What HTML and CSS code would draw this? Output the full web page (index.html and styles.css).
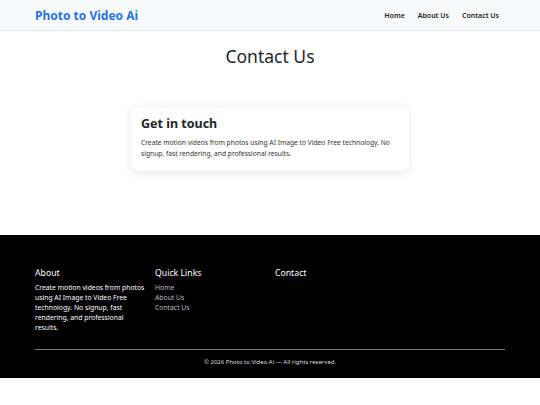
FILE: index.html
```html
<!DOCTYPE html>
<html>
<head>
<meta charset="utf-8">
<link rel="stylesheet" href="styles.css">
</head>
<body>
<header class="site-header">
  <div class="container header-inner">
    <a class="brand" href="#">Photo to Video Ai</a>
    <nav class="nav">
      <a href="#">Home</a>
      <a href="#">About Us</a>
      <a href="#">Contact Us</a>
    </nav>
  </div>
</header>
<main class="main">
  <h1 class="page-title">Contact Us</h1>
  <div class="card">
    <h2 class="card-title">Get in touch</h2>
    <p class="card-text">Create motion videos from photos using AI Image to Video Free technology. No signup, fast rendering, and professional results.</p>
  </div>
</main>
<footer class="footer">
  <div class="container">
    <div class="footer-cols">
      <div class="fcol">
        <h3 class="fhead">About</h3>
        <p class="ftext">Create motion videos from photos using AI Image to Video Free technology. No signup, fast rendering, and professional results.</p>
      </div>
      <div class="fcol">
        <h3 class="fhead">Quick Links</h3>
        <ul class="flinks">
          <li><a href="#">Home</a></li>
          <li><a href="#">About Us</a></li>
          <li><a href="#">Contact Us</a></li>
        </ul>
      </div>
      <div class="fcol">
        <h3 class="fhead">Contact</h3>
      </div>
    </div>
    <div class="copy">© 2026 Photo to Video Ai — All rights reserved.</div>
  </div>
</footer>
</body>
</html>
```
FILE: styles.css
```css
* { box-sizing: border-box; }
html, body { margin: 0; padding: 0; }
body {
  font-family: "Noto Sans", "Open Sans", sans-serif;
  color: #212529;
  background: #fff;
}
a { text-decoration: none; }
.container { width: 470px; margin: 0 auto; }
.site-header {
  background: #f8f9fa;
  border-bottom: 1px solid #e3e5e8;
  height: 31px;
}
.header-inner {
  height: 30px;
  display: flex;
  align-items: center;
  justify-content: space-between;
}
.brand {
  color: #1f74e6;
  font-weight: 700;
  font-size: 12px;
}
.nav { display: flex; gap: 13px; margin-right: 6px; }
.nav a {
  color: #212529;
  font-size: 7px;
  font-weight: 600;
}
.main {
  padding-top: 13px;
  height: 204px;
}
.page-title {
  margin: 0;
  text-align: center;
  font-weight: 400;
  font-size: 17.5px;
  line-height: 24px;
  color: #212529;
}
.card {
  width: 278px;
  margin: 39px auto 0;
  background: #fff;
  border-radius: 7px;
  box-shadow: 0 2px 10px rgba(0,0,0,0.09);
  padding: 7px 10px 12px;
}
.card-title {
  margin: 0 0 4px;
  font-size: 12.5px;
  font-weight: 700;
  line-height: 19px;
}
.card-text {
  margin: 0;
  font-size: 6.7px;
  line-height: 11px;
  color: #333;
}
.footer {
  background: #000;
  color: #fff;
  padding-top: 32px;
  height: 143px;
}
.footer-cols { display: flex; }
.fcol { width: 120px; padding-right: 10px; }
.fhead {
  margin: 0 0 3px;
  font-size: 8.7px;
  font-weight: 400;
  line-height: 13px;
}
.ftext {
  margin: 0;
  font-size: 6.8px;
  line-height: 10px;
}
.flinks { list-style: none; margin: 0; padding: 0; }
.flinks li { font-size: 6.8px; line-height: 10px; }
.flinks a { color: #bbb; }
.copy {
  margin-top: 16px;
  border-top: 1px solid #777;
  padding-top: 7px;
  text-align: center;
  font-size: 6px;
  line-height: 10px;
  color: #ddd;
}
```
